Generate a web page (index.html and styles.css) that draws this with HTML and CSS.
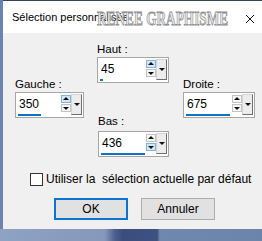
FILE: index.html
```html
<!DOCTYPE html>
<html lang="fr">
<head>
<meta charset="UTF-8">
<title>Sélection personnalisée</title>
<link rel="stylesheet" href="styles.css">
</head>
<body>

<div class="dialog">
    <div class="titlebar">
        <span class="title">Sélection personnalisée</span>
        <span class="watermark">RENEE GRAPHISME</span>
        <svg class="close" width="10" height="10" viewBox="0 0 10 10">
            <path d="M1 1 L9 9 M9 1 L1 9" stroke="#111" stroke-width="1" fill="none"/>
        </svg>
    </div>

    <div class="content">
        <div class="fields">
            <div class="col col-side col-left">
                <div class="label">Gauche :</div>
                <div class="spin">
                    <div class="spin-value"><span>350</span><i class="bar" style="width:23px"></i></div>
                    <div class="arrows"><b class="up active"></b><b class="down"></b></div>
                    <div class="drop"></div>
                </div>
            </div>

            <div class="col col-mid">
                <div class="label">Haut :</div>
                <div class="spin">
                    <div class="spin-value"><span>45</span><i class="bar" style="width:3px"></i></div>
                    <div class="arrows"><b class="up active"></b><b class="down"></b></div>
                    <div class="drop"></div>
                </div>

                <div class="label label-bas">Bas :</div>
                <div class="spin spin-bas">
                    <div class="spin-value"><span>436</span><i class="bar" style="width:44px"></i></div>
                    <div class="arrows"><b class="up"></b><b class="down active"></b></div>
                    <div class="drop"></div>
                </div>
            </div>

            <div class="col col-side">
                <div class="label">Droite :</div>
                <div class="spin">
                    <div class="spin-value"><span>675</span><i class="bar" style="width:44px"></i></div>
                    <div class="arrows"><b class="up"></b><b class="down"></b></div>
                    <div class="drop"></div>
                </div>
            </div>
        </div>

        <label class="check">
            <span class="box"></span>
            <span>Utiliser la&nbsp; sélection actuelle par défaut</span>
        </label>

        <div class="buttons">
            <button class="btn btn-default">OK</button>
            <button class="btn">Annuler</button>
        </div>
    </div>
</div>

<div class="wallpaper"></div>

</body>
</html>
```

FILE: styles.css
```css
body {
    margin: 0;
    width: 262px;
    height: 241px;
    overflow: hidden;
    background-color: #6a83b0;
    font-family: 'Liberation Sans', Arial, sans-serif;
    font-size: 12px;
    color: #000;
}

.dialog {
    margin-left: 3px;
    width: 259px;
    border-top: 1px solid #34445f;
    background-color: #f0f0f0;
}

.titlebar {
    position: relative;
    height: 32px;
    background-color: #fff;
    box-sizing: border-box;
    padding: 9px 0 0 9px;
}

.title {
    font-size: 11px;
    line-height: 15px;
    color: #000;
}

.watermark {
    position: absolute;
    left: 94px;
    top: 8px;
    font-family: 'Liberation Serif', 'Times New Roman', serif;
    font-weight: bold;
    font-size: 19px;
    line-height: 20px;
    color: #ececec;
    -webkit-text-stroke: 0.8px #8c8c8c;
    transform: scaleX(0.7);
    transform-origin: left top;
    white-space: nowrap;
}

.close {
    position: absolute;
    left: 242px;
    top: 13px;
}

.content {
    height: 196px;
    box-sizing: border-box;
    padding-top: 9px;
}

.fields {
    display: flex;
    padding-left: 12px;
}

.col-side {
    margin-top: 35px;
    width: 69px;
}

.col-mid {
    width: 72px;
    margin: 0 14px 0 13px;
}

.col-side:last-child {
    width: 72px;
}

.label {
    line-height: 14px;
    height: 14px;
    margin-bottom: 1px;
    font-size: 11.5px;
}

.label-bas {
    margin-top: 31px;
    margin-bottom: 3px;
    padding-left: 1px;
}

.spin {
    display: flex;
    height: 26px;
    box-sizing: border-box;
    border: 1px solid #a6a6a6;
    background-color: #fff;
    padding: 1px 1px 1px 0;
}

.spin-bas {
    margin-left: 1px;
}

.spin-value {
    flex: 1;
    display: flex;
    flex-direction: column;
    padding-left: 2px;
}

.spin-value span {
    line-height: 20px;
    padding-left: 1px;
}

.spin-value .bar {
    display: block;
    height: 3px;
    margin-top: auto;
    background-color: #1170c4;
}

.arrows {
    width: 10px;
    display: flex;
    flex-direction: column;
    gap: 1px;
    padding-top: 1px;
}

.arrows b {
    position: relative;
    display: block;
    width: 10px;
    height: 8px;
    box-sizing: border-box;
    border: 1px solid #c2c2c2;
    background-color: #f6f6f6;
}

.arrows b.active {
    border-color: #7fb4e6;
    background-color: #d3e7f8;
}

.arrows b::after {
    content: '';
    position: absolute;
    left: 1px;
    width: 0;
    height: 0;
    border-left: 3px solid transparent;
    border-right: 3px solid transparent;
}

.arrows .up::after {
    top: 1px;
    border-bottom: 3px solid #111;
}

.arrows .down::after {
    top: 2px;
    border-top: 3px solid #111;
}

.drop {
    position: relative;
    width: 11px;
    box-sizing: border-box;
    border: 1px solid #d4d4d4;
    border-right-color: #6e6e6e;
    border-bottom-color: #6e6e6e;
    background-color: #ececec;
    margin-bottom: 1px;
}

.drop::after {
    content: '';
    position: absolute;
    left: 2px;
    top: 8px;
    border-left: 3px solid transparent;
    border-right: 3px solid transparent;
    border-top: 3px solid #111;
}

.check {
    display: flex;
    align-items: center;
    gap: 3px;
    height: 16px;
    margin-top: 14px;
    padding-left: 27px;
}

.check .box {
    width: 13px;
    height: 13px;
    box-sizing: border-box;
    border: 1px solid #333;
    background-color: #fff;
}

.buttons {
    display: flex;
    gap: 13px;
    margin-top: 11px;
    padding-left: 51px;
}

.btn {
    width: 74px;
    height: 22px;
    box-sizing: border-box;
    border: 1px solid #adadad;
    background-color: #e1e1e1;
    font-family: 'Liberation Sans', Arial, sans-serif;
    font-size: 12px;
    color: #000;
    padding: 0;
}

.btn-default {
    border: 2px solid #0a74d0;
}

.wallpaper {
    height: 12px;
    background: linear-gradient(to right, #8ea2c3 0, #8598ba 40%, #4b5d88 44%, #3b4d7d 47%, #3e5182 60%, #7088ae 61%, #6c83aa 100%);
}
```
